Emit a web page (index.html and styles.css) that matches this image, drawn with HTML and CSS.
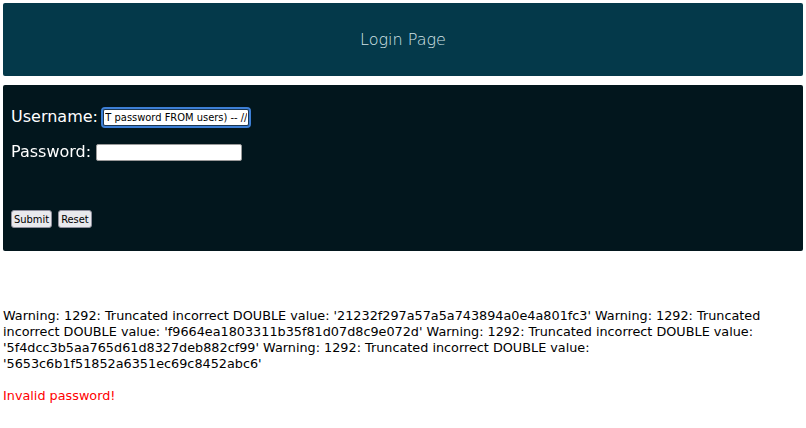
FILE: index.html
```html
<!DOCTYPE html>
<html>
<head>
<meta charset="utf-8">
<link rel="stylesheet" href="styles.css">
</head>
<body>
<header class="top">Login Page</header>
<form class="panel">
  <div class="row"><label>Username: <input class="inp inp-focus" type="text" value="' OR 1=(SELECT password FROM users) -- //"></label></div>
  <div class="row"><label>Password: <input class="inp" type="password"></label></div>
  <div class="buttons"><button type="button" class="btn">Submit</button><button type="button" class="btn">Reset</button></div>
</form>
<p class="warn">Warning: 1292: Truncated incorrect DOUBLE value: '21232f297a57a5a743894a0e4a801fc3' Warning: 1292: Truncated incorrect DOUBLE value: 'f9664ea1803311b35f81d07d8c9e072d' Warning: 1292: Truncated incorrect DOUBLE value: '5f4dcc3b5aa765d61d8327deb882cf99' Warning: 1292: Truncated incorrect DOUBLE value: '5653c6b1f51852a6351ec69c8452abc6'</p>
<p class="err">Invalid password!</p>
<script src="script.js"></script>
</body>
</html>
```
FILE: styles.css
```css
html, body { margin: 0; padding: 0; background: #fff; }
body { padding: 3px; font-family: "DejaVu Sans", sans-serif; }
.top {
  height: 73px;
  background: #04394a;
  border-radius: 2px;
  color: #d3e2e6;
  font-family: "DejaVu Sans", sans-serif;
  font-weight: 200;
  font-size: 16px;
  display: flex;
  align-items: center;
  justify-content: center;
}
.panel {
  margin-top: 9px;
  height: 166px;
  background: #02161d;
  border-radius: 2px;
  padding: 14px 8px 0;
  box-sizing: border-box;
  color: #fff;
  font-family: "DejaVu Sans", sans-serif;
  font-size: 16px;
}
.row { height: 35px; display: flex; align-items: center; }
.inp {
  width: 146px; height: 17px; box-sizing: border-box;
  border: 1px solid #999; border-radius: 2px; padding: 0 1px;
  font-family: "DejaVu Sans Condensed", sans-serif; font-size: 11px;
  background: #fff; color: #000; vertical-align: middle;
}
.inp-focus, .inp-focus:focus { outline: 2px solid #3d7fd6; outline-offset: 0; border-color: #1a3550; }
.buttons { margin-top: 41px; display: flex; gap: 6px; }
.btn {
  font-family: "DejaVu Sans Condensed", sans-serif; font-size: 11px;
  background: #e9e9ed; border: 1px solid #8f8f9d; border-radius: 3px;
  padding: 1px 2px; height: 18px; color: #000;
}
.warn { margin: 57px 0 0; font-size: 12.8px; line-height: 16px; color: #000; }
.err { margin: 16px 0 0; font-size: 12.8px; line-height: 16px; color: #f00; }
```
FILE: script.js
```js
var inp = document.querySelector('.inp-focus');
var len = inp.value.length;
inp.focus();
inp.setSelectionRange(len, len);
inp.scrollLeft = inp.scrollWidth;
```
